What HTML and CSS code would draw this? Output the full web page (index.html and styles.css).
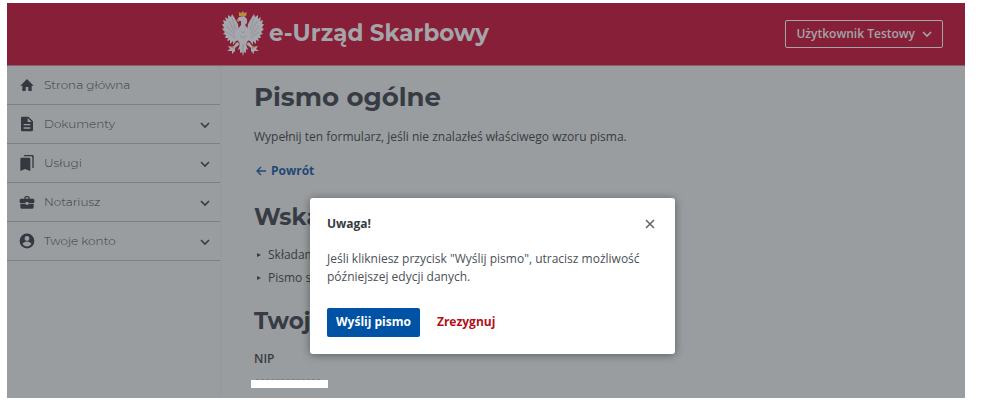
FILE: index.html
```
<!DOCTYPE html>
<html lang="pl">
<head>
    <meta charset="UTF-8">
    <meta name="viewport" content="width=device-width, initial-scale=1.0">
    <title>e-Urząd Skarbowy - Pismo ogólne</title>
    <link rel="stylesheet" href="styles.css">
</head>
<body>
    <div class="app">
        <header class="header">
            <a href="#" class="brand">
                <svg class="eagle" viewBox="0 0 42 45" aria-hidden="true">
                    <g fill="#a4a7ac">
                        <path d="M17 20 16 13 12 6 10 3 9 6 6 4 6 8 3 6 4 10 1 9 2 13 0 13 2 17 0 18 3 21 1 23 4 24 3 27 6 27 5 30 8 29 8 33 11 30 11 34 14 30 17 29Z"/>
                        <path d="M25 20 26 13 30 6 32 3 33 6 36 4 36 8 39 6 38 10 41 9 40 13 42 13 40 17 42 18 39 21 41 23 38 24 39 27 36 27 37 30 34 29 34 33 31 30 31 34 28 30 25 29Z"/>
                        <path d="M17 10 15 9 17 6 22 5 25 8 25 12 23 14 27 19 27 28 24 33 26 39 24 38 24 42 22 41 21 45 20 41 18 42 18 38 16 39 18 33 15 28 15 19 19 14 19 10Z"/>
                        <path d="M15 31 11 36 6 35 8 38 5 40 10 40 10 43 13 40 13 37 18 33Z"/>
                        <path d="M27 31 31 36 36 35 34 38 37 40 32 40 32 43 29 40 29 37 24 33Z"/>
                    </g>
                    <path d="M7 10 13 22M5 15 13 25M5 21 13 27M10 7 14 19M35 10 29 22M37 15 29 25M37 21 29 27M32 7 28 19M19 20 21 22 23 20M18 25 21 27 24 25M21 33V42" fill="none" stroke="#8f818b" stroke-width=".6"/>
                    <path d="M17 5 17 1 19 2 21 0 22 2 25 1 24 5Z" fill="#b0903d"/>
                    <path d="M14 10 17 8 17 11ZM8 36 12 35 12 38ZM34 36 30 35 30 38Z" fill="#a98a55"/>
                </svg>
                <span>e-Urząd Skarbowy</span>
            </a>
            <button type="button" class="user-btn">
                Użytkownik Testowy
                <svg class="chevron" viewBox="0 0 10 10" aria-hidden="true"><path d="M1 3 5 7 9 3"/></svg>
            </button>
        </header>

        <div class="layout">
            <nav class="sidebar">
                <a href="#" class="nav-item">
                    <svg class="nav-icon" viewBox="0 0 24 24" aria-hidden="true"><path d="M10 21v-6h4v6h5v-8h3L12 3 2 13h3v8z"/></svg>
                    <span>Strona główna</span>
                </a>
                <a href="#" class="nav-item">
                    <svg class="nav-icon" viewBox="0 0 24 24" aria-hidden="true"><path d="M14 1H5a2 2 0 0 0-2 2v18a2 2 0 0 0 2 2h14a2 2 0 0 0 2-2V8zm3 18H7v-2h10zm0-5H7v-2h10zm-4-5V3l6 6z"/></svg>
                    <span>Dokumenty</span>
                    <svg class="chevron" viewBox="0 0 10 10" aria-hidden="true"><path d="M1 4 5 8 9 4"/></svg>
                </a>
                <a href="#" class="nav-item">
                    <svg class="nav-icon" viewBox="0 0 24 24" aria-hidden="true"><path d="M20 19l2 1V2a2 2 0 0 0-2-2H9a2 2 0 0 0-2 2h11a2 2 0 0 1 2 2zM15 4H4a2 2 0 0 0-2 2v18l7-3 8 3V6a2 2 0 0 0-2-2z"/></svg>
                    <span>Usługi</span>
                    <svg class="chevron" viewBox="0 0 10 10" aria-hidden="true"><path d="M1 4 5 8 9 4"/></svg>
                </a>
                <a href="#" class="nav-item">
                    <svg class="nav-icon" viewBox="0 0 24 24" aria-hidden="true"><path d="M10 16v-1H2v5a2 2 0 0 0 2 2h16a2 2 0 0 0 2-2v-5h-8v1zM21 7h-5V5l-2-2h-4L8 5v2H3a2 2 0 0 0-2 2v3a2 2 0 0 0 2 2h7v-2h4v2h7a2 2 0 0 0 2-2V9a2 2 0 0 0-2-2zm-7 0h-4V5h4z"/></svg>
                    <span>Notariusz</span>
                    <svg class="chevron" viewBox="0 0 10 10" aria-hidden="true"><path d="M1 4 5 8 9 4"/></svg>
                </a>
                <a href="#" class="nav-item">
                    <svg class="nav-icon" viewBox="-1 -1 26 26" aria-hidden="true"><path fill-rule="evenodd" d="M12 0a12 12 0 1 0 0 24 12 12 0 0 0 0-24zm0 4a4 4 0 1 1 0 8 4 4 0 0 1 0-8zm0 17c-3 0-5.500-1.500-7-4 0-2.500 4.500-4 7-4s7 1.500 7 4c-1.500 2.500-4 4-7 4z"/></svg>
                    <span>Twoje konto</span>
                    <svg class="chevron" viewBox="0 0 10 10" aria-hidden="true"><path d="M1 4 5 8 9 4"/></svg>
                </a>
            </nav>

            <main class="content">
                <h1>Pismo ogólne</h1>
                <p class="lead">Wypełnij ten formularz, jeśli nie znalazłeś właściwego wzoru pisma.</p>
                <a href="#" class="back">
                    <svg class="arrow" viewBox="0 0 10 10" aria-hidden="true"><path d="M10 5H1M5 1 1 5 5 9"/></svg>
                    Powrót
                </a>
                <h2>Wska</h2>
                <ul class="options">
                    <li>Składam</li>
                    <li>Pismo s</li>
                </ul>
                <h2>Twoj</h2>
                <div class="field-label">NIP</div>
                <div class="field-mask"></div>
            </main>
        </div>
    </div>

    <div class="overlay">
        <div class="modal" role="dialog" aria-modal="true" aria-labelledby="modalTitle">
            <div class="modal-header">
                <h3 id="modalTitle">Uwaga!</h3>
                <button type="button" class="close-btn" aria-label="Zamknij">
                    <svg viewBox="0 0 10 10" aria-hidden="true"><path d="M1 1 9 9M9 1 1 9"/></svg>
                </button>
            </div>
            <p>Jeśli klikniesz przycisk "Wyślij pismo", utracisz możliwość późniejszej edycji danych.</p>
            <div class="modal-actions">
                <button type="button" class="btn btn-primary">Wyślij pismo</button>
                <button type="button" class="btn btn-cancel">Zrezygnuj</button>
            </div>
        </div>
    </div>
</body>
</html>
```

FILE: styles.css
```
* {
    box-sizing: border-box;
}

body {
    margin: 0;
    padding: 3px 17px 5px 7px;
    min-height: 100vh;
    display: flex;
    background: #fff;
    color: #373c44;
    font-family: "Open Sans", "Noto Sans", sans-serif;
    font-size: 12px;
    line-height: 18px;
}

h1, h2, h3, p, ul {
    margin: 0;
    padding: 0;
}

a {
    text-decoration: none;
}

button {
    font-family: inherit;
    font-size: 12px;
    font-weight: bold;
    line-height: 18px;
    cursor: pointer;
}

.app {
    flex: 1;
    display: flex;
    flex-direction: column;
    background: #999d9f;
}

.header {
    display: flex;
    align-items: center;
    justify-content: space-between;
    height: 63px;
    padding: 0 22px 0 215px;
    background: #881f38;
    border-bottom: 1px solid #86616b;
}

.brand {
    display: flex;
    align-items: center;
    gap: 5px;
    padding-bottom: 2px;
    color: #a3a5a8;
    font-family: Montserrat, Inter, sans-serif;
    font-size: 23px;
    font-weight: bold;
    line-height: 28px;
}

.eagle {
    width: 42px;
    height: 45px;
}

.user-btn {
    display: flex;
    align-items: center;
    gap: 7px;
    padding: 4px 10px;
    background: transparent;
    border: 1px solid #a3a5a8;
    border-radius: 2px;
    color: #a3a5a8;
    font-weight: 600;
}

.chevron {
    width: 10px;
    height: 10px;
    fill: none;
    stroke: currentColor;
    stroke-width: 1.6;
}

.layout {
    flex: 1;
    display: flex;
}

.sidebar {
    width: 214px;
    border-right: 1px solid #94989a;
}

.nav-item {
    display: flex;
    align-items: center;
    gap: 9px;
    height: 39px;
    padding: 0 10px 0 12px;
    border-bottom: 1px solid #7b8083;
    color: #373c44;
    font-family: Montserrat, Inter, sans-serif;
    font-weight: 300;
}

.nav-icon {
    width: 16px;
    height: 16px;
    fill: #343941;
}

.nav-item .chevron {
    margin-left: auto;
}

.content {
    flex: 1;
    padding: 14px 33px 0;
}

h1, h2 {
    font-family: Montserrat, Inter, sans-serif;
    font-weight: bold;
}

h1 {
    font-size: 26px;
    line-height: 34px;
}

h2 {
    margin: 22px 0 14px;
    font-size: 23px;
    line-height: 30px;
}

.lead {
    margin: 14px 0 16px;
}

.back {
    display: flex;
    align-items: center;
    gap: 5px;
    padding-left: 2px;
    color: #224876;
    font-weight: bold;
}

.arrow {
    width: 10px;
    height: 10px;
    fill: none;
    stroke: currentColor;
    stroke-width: 1.3;
}

.options {
    display: grid;
    gap: 5px;
    margin-bottom: -3px;
    list-style: none;
}

.options li {
    display: flex;
    align-items: center;
    gap: 7px;
    padding-left: 3px;
}

.options li::before {
    content: "";
    border-left: 4px solid #373c44;
    border-top: 2px solid transparent;
    border-bottom: 2px solid transparent;
}

.field-label {
    font-weight: 600;
}

.field-mask {
    position: relative;
    width: 77px;
    height: 8px;
    margin: 12px 0 0 -3px;
    background: #fff;
}

.field-mask::before {
    content: "";
    position: absolute;
    top: -1px;
    left: 5px;
    right: 8px;
    border-top: 1px dashed #7b8083;
}

.overlay {
    position: absolute;
    inset: 0;
    display: flex;
    align-items: flex-start;
    justify-content: center;
    padding: 198px 0 0 3px;
}

.modal {
    width: 365px;
    padding: 17px;
    background: #fff;
    border-radius: 3px;
    box-shadow: 0 1px 8px rgba(0, 0, 0, 0.4);
}

.modal-header {
    display: flex;
    align-items: center;
    justify-content: space-between;
    margin-bottom: 17px;
}

.modal h3 {
    font-size: 12px;
    line-height: 18px;
}

.modal p {
    color: #4b5057;
}

.close-btn {
    display: flex;
    padding: 3px;
    background: none;
    border: none;
    color: #666;
}

.close-btn svg {
    width: 10px;
    height: 10px;
    stroke: currentColor;
    stroke-width: 1.6;
}

.modal-actions {
    display: flex;
    gap: 8px;
    margin-top: 22px;
}

.btn {
    padding: 5px 9px 6px;
    border: none;
    border-radius: 2px;
}

.btn-primary {
    background: #0052a5;
    color: #fff;
}

.btn-cancel {
    background: none;
    color: #b1101a;
}
```
